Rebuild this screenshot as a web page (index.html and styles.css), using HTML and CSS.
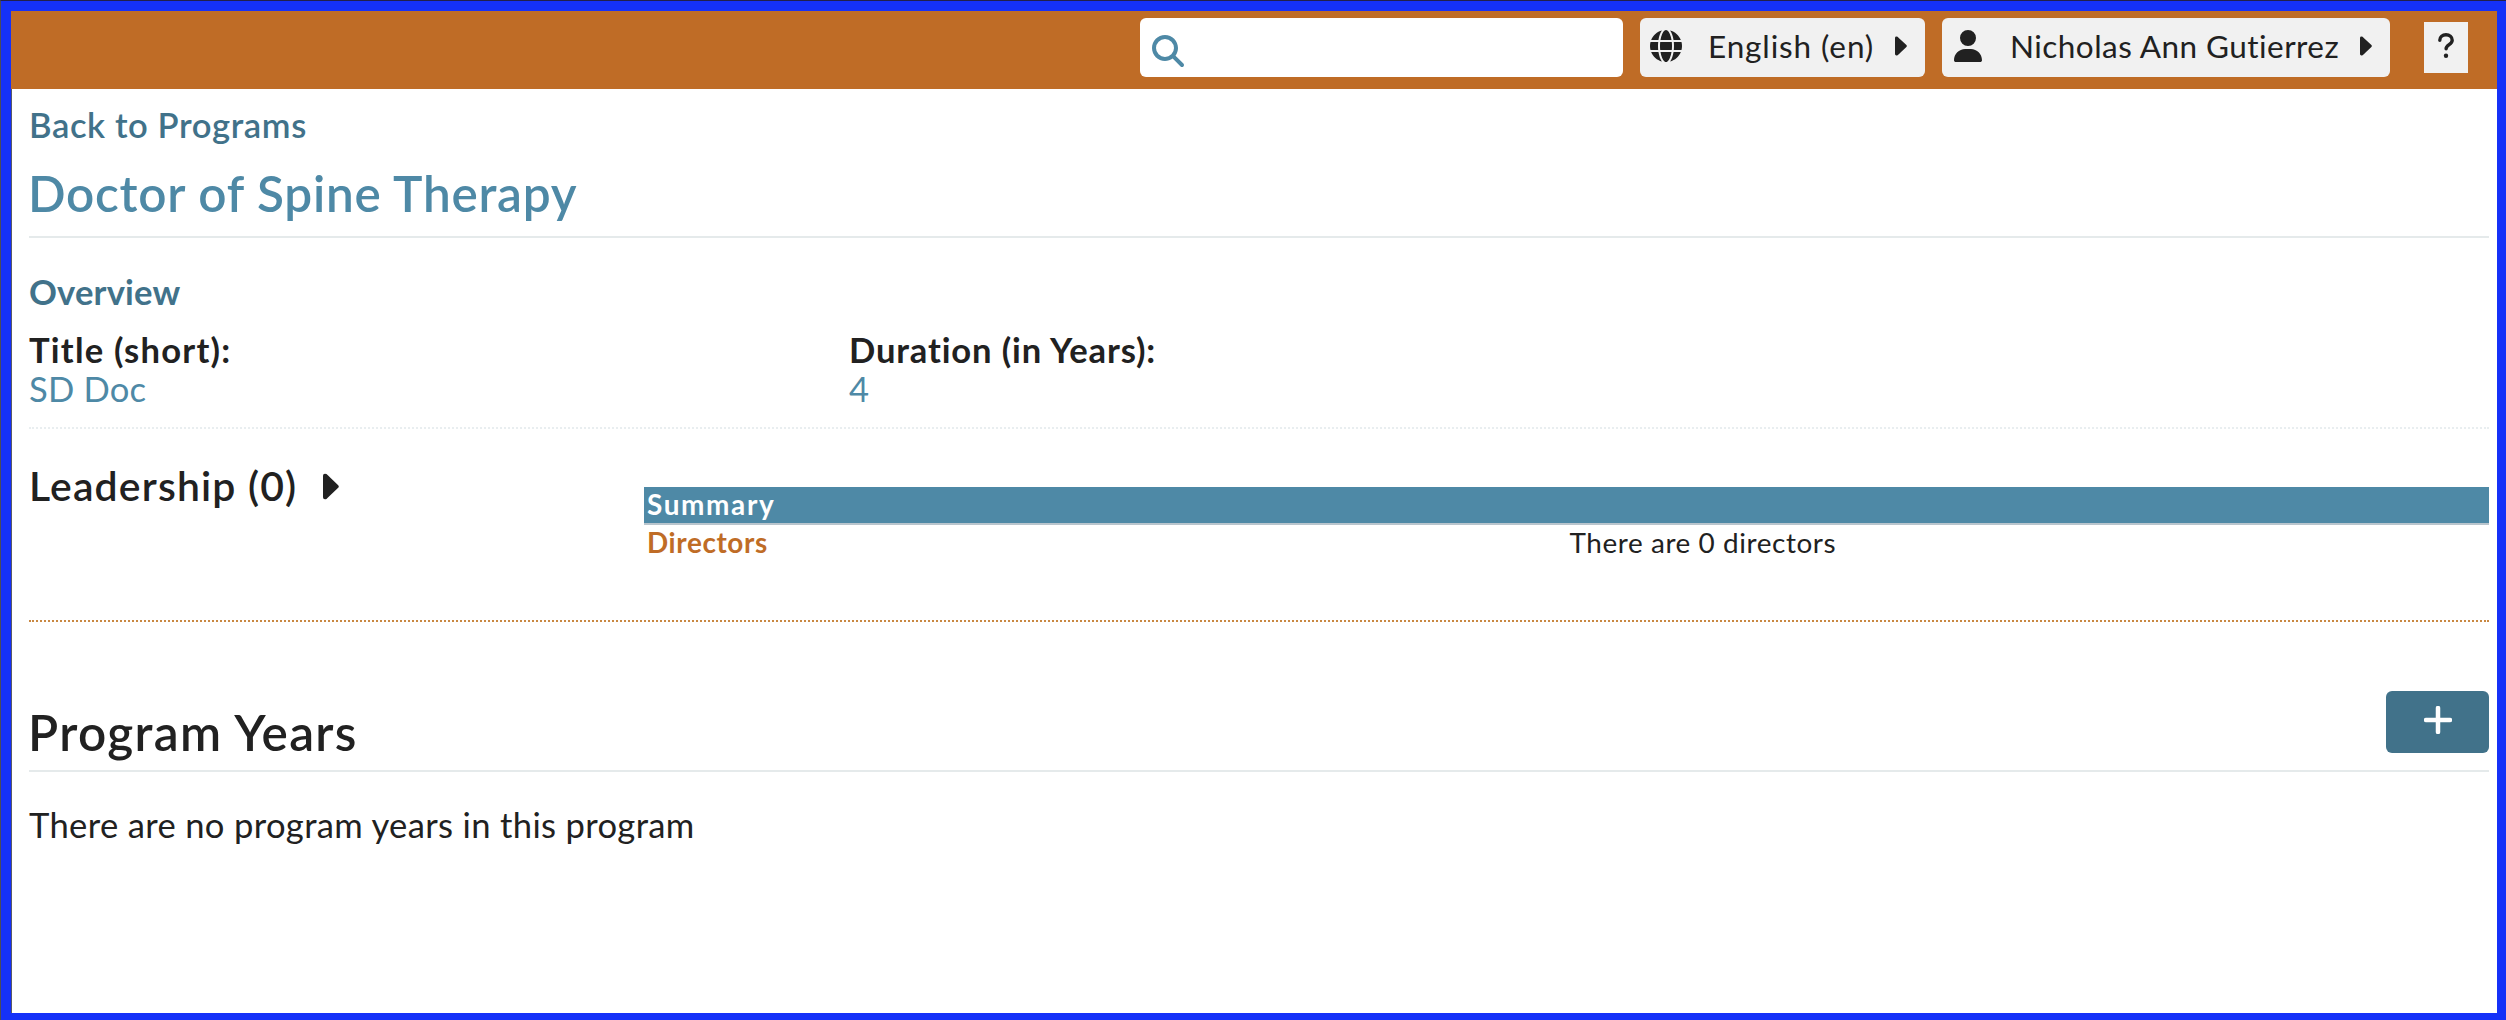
FILE: index.html
```html
<!DOCTYPE html>
<html lang="en">
<head>
<meta charset="utf-8">
<title>Doctor of Spine Therapy</title>
<link rel="stylesheet" href="styles.css">
</head>
<body>
<div class="frame">
  <div class="app">
    <header class="topbar">
      <label class="search">
        <svg class="icon" viewBox="0 0 512 512"><path d="M416 208c0 45.900-14.900 88.300-40 122.700L502.600 457.400c12.500 12.500 12.500 32.800 0 45.300s-32.800 12.500-45.300 0L330.700 376c-34.400 25.200-76.800 40-122.700 40C93.100 416 0 322.900 0 208S93.100 0 208 0S416 93.100 416 208zM208 352a144 144 0 1 0 0-288 144 144 0 1 0 0 288z"/></svg>
      </label>
      <button class="menu locale">
        <svg class="icon" viewBox="0 0 512 512"><path d="M352 256c0 22.200-1.200 43.600-3.300 64H163.300c-2.200-20.400-3.300-41.800-3.300-64s1.200-43.600 3.300-64H348.700c2.200 20.400 3.300 41.800 3.300 64zm28.800-64H503.900c5.300 20.500 8.100 41.900 8.100 64s-2.800 43.500-8.100 64H380.800c2.100-20.600 3.200-42 3.200-64s-1.100-43.400-3.200-64zm112.600-32H376.700c-10-63.900-29.800-117.400-55.300-151.600c78.300 20.700 142 77.500 171.900 151.600zm-149.100 0H167.700c6.100-36.400 15.500-68.600 27-94.700c10.500-23.600 22.200-40.700 33.500-51.500C239.400 3.200 248.700 0 256 0s16.600 3.200 27.800 13.800c11.300 10.800 23 27.900 33.500 51.500c11.600 26 20.900 58.200 27 94.700zm-209 0H18.600C48.600 85.900 112.200 29.100 190.600 8.400C165.100 42.600 145.300 96.100 135.300 160zM8.100 192H131.200c-2.100 20.600-3.200 42-3.200 64s1.100 43.400 3.200 64H8.100C2.800 299.500 0 278.100 0 256s2.800-43.500 8.100-64zM194.700 446.600c-11.600-26-20.900-58.200-27-94.600H344.300c-6.100 36.400-15.500 68.600-27 94.600c-10.500 23.600-22.200 40.700-33.500 51.500C272.600 508.800 263.300 512 256 512s-16.600-3.200-27.800-13.800c-11.300-10.800-23-27.900-33.500-51.500zM135.300 352c10 63.900 29.800 117.400 55.300 151.600C112.200 482.900 48.600 426.100 18.600 352H135.300zm358.100 0c-30 74.100-93.600 130.900-171.900 151.600c25.500-34.200 45.200-87.700 55.300-151.600H493.400z"/></svg>
        <span class="locale-name">English (en)</span>
        <svg class="caret" viewBox="0 0 12 20"><path d="M0 2Q0 0 2.600.7Q5 3 11.400 9Q12.300 10 11.400 11Q5 17 2.600 19.300Q0 20 0 18Z"/></svg>
      </button>
      <button class="menu user">
        <svg class="icon person" viewBox="0 0 448 512"><path d="M224 256a128 128 0 1 0 0-256 128 128 0 1 0 0 256zM178.300 304C79.800 304 0 383.800 0 482.300C0 498.700 13.300 512 29.700 512H418.300c16.400 0 29.700-13.300 29.700-29.700C448 383.800 368.200 304 269.700 304H178.300z"/></svg>
        <span class="user-name">Nicholas Ann Gutierrez</span>
        <svg class="caret" viewBox="0 0 12 20"><path d="M0 2Q0 0 2.600.7Q5 3 11.400 9Q12.300 10 11.400 11Q5 17 2.600 19.300Q0 20 0 18Z"/></svg>
      </button>
      <button class="help"><svg class="question" viewBox="0 0 16 25"><path d="M1.800 7.200C1.800 3.800 4.500 1.800 8 1.800S14.200 4 14.200 7.200C14.200 11.700 8.100 11.500 8.100 15.800"/><circle cx="8" cy="22.700" r="2.200"/></svg></button>
    </header>
    <main class="content">
      <a class="back">Back to Programs</a>
      <h1 class="title">Doctor of Spine Therapy</h1>
      <section class="overview">
        <h2 class="overview-heading">Overview</h2>
        <div class="fields">
          <div class="field">
            <div class="label short">Title (short):</div>
            <div class="value">SD Doc</div>
          </div>
          <div class="field">
            <div class="label">Duration (in Years):</div>
            <div class="value">4</div>
          </div>
        </div>
      </section>
      <section class="leadership">
        <h2 class="leadership-heading"><span>Leadership (0)</span>
          <svg class="caret large" viewBox="0 0 12 20" preserveAspectRatio="none"><path d="M0 2Q0 0 2.600.7Q5 3 11.400 9Q12.300 10 11.400 11Q5 17 2.600 19.300Q0 20 0 18Z"/></svg>
        </h2>
        <div class="summary">
          <div class="summary-head">Summary</div>
          <div class="summary-row">
            <div class="role">Directors</div>
            <div class="count">There are 0 directors</div>
          </div>
        </div>
      </section>
      <section class="years">
        <div class="years-head">
          <h2 class="years-heading">Program Years</h2>
          <button class="add"><svg class="plus" viewBox="0 0 28 28"><path d="M14 2V26M2 14H26"/></svg></button>
        </div>
        <p class="empty">There are no program years in this program</p>
      </section>
    </main>
  </div>
</div>
</body>
</html>
```
FILE: styles.css
```css
* { box-sizing: border-box; }

body {
  margin: 0;
  background: #fff;
  color: #212121;
  font-family: Lato, "Open Sans", sans-serif;
  font-size: 34.6px;
}

h1, h2, p { margin: 0; }
h1, h2 { font-weight: 600; }
button { border: 0; font: inherit; color: inherit; }
svg { display: block; flex: none; }

.frame {
  height: 1020px;
  border-top: 1px solid #22204c;
  border-left: 1px solid #4c4c58;
}

.app {
  height: 1019px;
  border: solid #1531f8;
  border-width: 10px 9px 7px 10px;
  box-shadow: inset 1px 0 #5a5a66;
}

.topbar {
  display: flex;
  align-items: flex-start;
  height: 78px;
  padding: 7px 29px 0 0;
  justify-content: flex-end;
  background: #bf6c26;
}

.search {
  width: 483px;
  height: 59px;
  padding: 17px 12px;
  margin-right: 17px;
  border-radius: 6px;
  background: #fff;
}

.icon { width: 32px; height: 32px; fill: #212121; }
.search .icon { fill: #4e89a6; }
.person { width: 28px; }

.menu {
  display: flex;
  align-items: center;
  height: 59px;
  padding: 0 18px 3px 10px;
  border-radius: 6px;
  background: #f1f1f1;
  font-size: 31.5px;
  line-height: 40px;
  white-space: nowrap;
}

.locale { width: 285px; margin-right: 17px; }
.user { width: 448px; padding-left: 12px; }
.locale-name { margin-left: 26px; letter-spacing: .88px; }
.user-name { margin-left: 28px; letter-spacing: .46px; }
.caret { width: 12px; height: 20px; fill: #212121; margin-left: auto; }

.help {
  display: flex;
  align-items: flex-start;
  justify-content: center;
  width: 44px;
  height: 51px;
  margin: 4px 0 0 34px;
  padding: 11px 0 0;
  background: #f1f1f1;
}
.question {
  width: 16px;
  height: 25px;
  fill: #212121;
}
.question path {
  fill: none;
  stroke: #212121;
  stroke-width: 3.4;
  stroke-linecap: round;
}

.content { padding: 16px 8px 0 18px; }

.back {
  display: block;
  line-height: 40px;
  font-weight: 600;
  letter-spacing: .6px;
  color: #41728a;
}

.title {
  margin-top: 18px;
  padding-bottom: 13px;
  border-bottom: 2px solid #e5eaeb;
  font-size: 49.5px;
  line-height: 60px;
  letter-spacing: .74px;
  color: #4e89a6;
  text-indent: -1px;
}

.overview {
  padding: 34px 0 19px;
  border-bottom: 2px dotted #e9eef0;
}
.overview-heading {
  font-size: 34.6px;
  font-weight: 700;
  line-height: 40px;
  letter-spacing: .17px;
  color: #41728a;
}
.fields {
  display: grid;
  grid-template-columns: repeat(3, 1fr);
  margin-top: 18px;
  line-height: 39px;
}
.label { font-weight: 700; letter-spacing: .86px; }
.short { letter-spacing: 1.22px; }
.value { color: #4e89a6; letter-spacing: .17px; }

.leadership {
  display: grid;
  grid-template-columns: 1fr 3fr;
  height: 193px;
  padding-top: 31px;
  border-bottom: 2px dotted #c98842;
}
.leadership-heading {
  display: flex;
  height: 52px;
  padding-top: 1px;
  font-size: 40.9px;
  line-height: 50px;
  letter-spacing: 1.17px;
}
.caret.large { width: 16px; height: 27px; margin: 12px 0 0 26px; }

.summary {
  padding-top: 27px;
  font-size: 27.9px;
  line-height: 33px;
}
.summary-head {
  height: 38px;
  padding: 1px 0 0 3px;
  border-bottom: 2px solid #b9c5cd;
  background: #4e89a6;
  color: #fff;
  font-weight: 700;
  letter-spacing: 1.65px;
}
.summary-row { display: grid; grid-template-columns: 1fr 1fr; padding-top: 1px; }
.role {
  padding-left: 3px;
  color: #bf6c26;
  font-weight: 700;
  letter-spacing: .61px;
}
.count { padding-left: 3px; letter-spacing: .58px; }

.years-head {
  display: flex;
  justify-content: space-between;
  height: 150px;
  padding-top: 69px;
  border-bottom: 2px solid #e5eaeb;
}
.years-heading {
  margin-top: 11px;
  font-size: 49.5px;
  line-height: 60px;
  letter-spacing: 1.34px;
  text-indent: -1px;
}
.add {
  display: flex;
  align-items: flex-start;
  justify-content: center;
  width: 103px;
  height: 62px;
  padding: 15px 0 0;
  border-radius: 6px;
  background: #41728a;
}
.plus {
  width: 28px;
  height: 28px;
  stroke: #fff;
  stroke-width: 4.5;
  stroke-linecap: round;
}
.empty { margin-top: 33px; line-height: 40px; letter-spacing: .34px; }
```
